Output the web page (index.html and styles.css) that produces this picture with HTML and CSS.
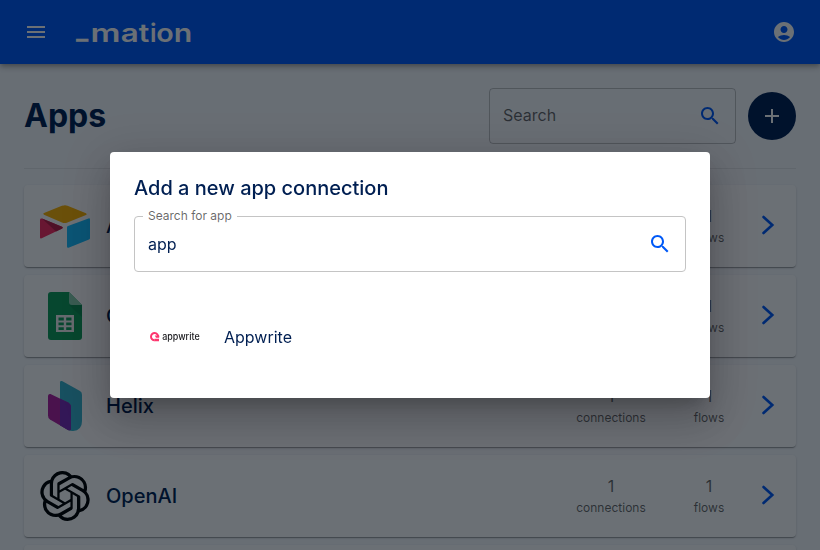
FILE: index.html
```html
<!DOCTYPE html>
<html lang="en">
<head>
<meta charset="UTF-8">
<meta name="viewport" content="width=device-width, initial-scale=1.0">
<title>Apps</title>
<link rel="stylesheet" href="styles.css">
</head>
<body>
<header class="appbar">
    <svg class="icon" viewBox="0 0 24 24"><path d="M3 18h18v-2H3v2zm0-5h18v-2H3v2zm0-7v2h18V6H3z"/></svg>
    <svg class="logo" width="120" height="34" viewBox="0 0 120 34">
        <text class="underscore" x="1.200" y="23.500">_</text>
        <text x="15.500" y="26.500" textLength="30" lengthAdjust="spacingAndGlyphs">m</text>
        <text x="45.800" y="26.500" textLength="18" lengthAdjust="spacingAndGlyphs">a</text>
        <text x="63.800" y="26.500" textLength="10.500" lengthAdjust="spacingAndGlyphs">t</text>
        <text x="75" y="26.500">i</text>
        <text x="81.300" y="26.500" textLength="17.500" lengthAdjust="spacingAndGlyphs">o</text>
        <text x="98.700" y="26.500" textLength="18.500" lengthAdjust="spacingAndGlyphs">n</text>
    </svg>
    <svg class="icon account" viewBox="0 0 24 24"><path d="M12 2C6.48 2 2 6.48 2 12s4.48 10 10 10 10-4.48 10-10S17.52 2 12 2zm0 4c1.93 0 3.5 1.57 3.5 3.5S13.93 13 12 13s-3.5-1.57-3.5-3.5S10.07 6 12 6zm0 14c-2.03 0-4.43-.82-6.14-2.88C7.55 15.8 9.68 15 12 15s4.45.8 6.14 2.12C16.43 19.18 14.03 20 12 20z"/></svg>
</header>

<main class="container">
    <div class="toolbar">
        <h1>Apps</h1>
        <div class="search">
            <span>Search</span>
            <svg class="icon" viewBox="0 0 24 24"><path d="M15.5 14h-.79l-.28-.27C15.41 12.59 16 11.11 16 9.5 16 5.91 13.09 3 9.5 3S3 5.91 3 9.5 5.91 16 9.5 16c1.61 0 3.09-.59 4.23-1.57l.27.28v.79l5 4.99L20.49 19l-4.99-5zm-6 0C7.01 14 5 11.99 5 9.5S7.01 5 9.5 5 14 7.01 14 9.5 11.99 14 9.5 14z"/></svg>
        </div>
        <button class="add-btn"><svg class="icon" viewBox="0 0 24 24"><path d="M19 13h-6v6h-2v-6H5v-2h6V5h2v6h6v2z"/></svg></button>
    </div>
    <hr>

    <div class="card">
        <svg class="app-icon" viewBox="0 0 50 50">
            <path fill="#fcb400" d="M22.500 4.500 4 12q-1.600.9 0 1.700L22 21.500q2.700 1 5.400 0L46 14q1.600-.8 0-1.700L27.500 4.700q-2.500-.9-5 0z"/>
            <path fill="#18bfff" d="M27 26.500v19q.1 1.600 1.500 1.200L49 38.500q1-.4 1-1.300V18.500q0-1.500-1.500-1.100L28 25q-1 .4-1 1.500z"/>
            <path fill="#f82b60" d="m22.200 27.500-20.500 9.800Q0 37.800 0 36.500V18.800Q.3 17 2 17.600l20 8.100q1.500.8.2 1.800z"/>
            <path fill="#ba1e45" d="m16 30.500-14-12.900 20 8.100q1.500.8.200 1.800z"/>
        </svg>
        <h2>Airtable</h2>
        <div class="count"><b>1</b><span>connections</span></div>
        <div class="count"><b>1</b><span>flows</span></div>
        <svg class="icon arrow" viewBox="0 0 24 24"><path d="m7.500 4 8.800 8-8.800 8"/></svg>
    </div>

    <div class="card">
        <svg class="app-icon" viewBox="0 0 50 50">
            <path fill="#0f9d58" d="M11 1h18l13 13v32q0 3-3 3H11q-3 0-3-3V4q0-3 3-3z"/>
            <path fill="#0b8049" d="m29 14 13 12V14z" opacity=".5"/>
            <path fill="#87ceac" d="M29 1v10q0 3 3 3h10z"/>
            <path fill="#f1f1f1" fill-rule="evenodd" d="M16 24h18v17H16zm2.500 2.500v3h5.300v-3zm7.700 0v3h5.300v-3zm-7.700 5v2.700h5.300v-2.700zm7.700 0v2.700h5.300v-2.700zm-7.700 4.700v2.800h5.300v-2.800zm7.700 0v2.800h5.300v-2.800z"/>
        </svg>
        <h2>Google Sheets</h2>
        <div class="count"><b>1</b><span>connections</span></div>
        <div class="count"><b>1</b><span>flows</span></div>
        <svg class="icon arrow" viewBox="0 0 24 24"><path d="m7.500 4 8.800 8-8.800 8"/></svg>
    </div>

    <div class="card">
        <svg class="app-icon" viewBox="0 0 50 50">
            <path fill="#38b4cc" d="M22 0 40 10q2 1.200 2 4v26q0 9.500-9 10-3 0-5-1l-8-5V1.500Q20.300-.6 22 0z"/>
            <path fill="#b0209f" d="m10.500 13 17.500 8.500q3 1.500 3 5V48q-.5 2-3 1L10 38.500q-2-1.200-2-4V14.500q.5-2 2.500-1.500z"/>
            <path fill="#7b2cb8" d="m20 17.700 8 3.800q3 1.500 3 5V48q-.5 2-3 1l-8-4.700z"/>
        </svg>
        <h2>Helix</h2>
        <div class="count"><b>1</b><span>connections</span></div>
        <div class="count"><b>1</b><span>flows</span></div>
        <svg class="icon arrow" viewBox="0 0 24 24"><path d="m7.500 4 8.800 8-8.800 8"/></svg>
    </div>

    <div class="card">
        <svg class="app-icon" viewBox="0 0 24 24"><path d="M22.2819 9.8211a5.9847 5.9847 0 0 0-.5157-4.9108 6.0462 6.0462 0 0 0-6.5098-2.9A6.0651 6.0651 0 0 0 4.9807 4.1818a5.9847 5.9847 0 0 0-3.9977 2.9 6.0462 6.0462 0 0 0 .7427 7.0966 5.98 5.98 0 0 0 .511 4.9107 6.051 6.051 0 0 0 6.5146 2.9001A5.9847 5.9847 0 0 0 13.2599 24a6.0557 6.0557 0 0 0 5.7718-4.2058 5.9894 5.9894 0 0 0 3.9977-2.9001 6.0557 6.0557 0 0 0-.7475-7.0729zm-9.022 12.6081a4.4755 4.4755 0 0 1-2.8764-1.0408l.1419-.0804 4.7783-2.7582a.7948.7948 0 0 0 .3927-.6813v-6.7369l2.02 1.1686a.071.071 0 0 1 .038.052v5.5826a4.504 4.504 0 0 1-4.4945 4.4944zm-9.6607-4.1254a4.4708 4.4708 0 0 1-.5346-3.0137l.142.0852 4.783 2.7582a.7712.7712 0 0 0 .7806 0l5.8428-3.3685v2.3324a.0804.0804 0 0 1-.0332.0615L9.74 19.9502a4.4992 4.4992 0 0 1-6.1408-1.6464zM2.3408 7.8956a4.485 4.485 0 0 1 2.3655-1.9728V11.6a.7664.7664 0 0 0 .3879.6765l5.8144 3.3543-2.0201 1.1685a.0757.0757 0 0 1-.071 0l-4.8303-2.7865A4.504 4.504 0 0 1 2.3408 7.872zm16.5963 3.8558L13.1038 8.364 15.1192 7.2a.0757.0757 0 0 1 .071 0l4.8303 2.7913a4.4944 4.4944 0 0 1-.6765 8.1042v-5.6772a.79.79 0 0 0-.407-.667zm2.0107-3.0231l-.142-.0852-4.7735-2.7818a.7759.7759 0 0 0-.7854 0L9.409 9.2297V6.8974a.0662.0662 0 0 1 .0284-.0615l4.8303-2.7866a4.4992 4.4992 0 0 1 6.6802 4.66zM8.3065 12.863l-2.02-1.1638a.0804.0804 0 0 1-.038-.0567V6.0742a4.4992 4.4992 0 0 1 7.3757-3.4537l-.142.0805L8.704 5.459a.7948.7948 0 0 0-.3927.6813zm1.0976-2.3654l2.602-1.4998 2.6069 1.4998v2.9994l-2.5974 1.4997-2.6067-1.4997Z"/></svg>
        <h2>OpenAI</h2>
        <div class="count"><b>1</b><span>connections</span></div>
        <div class="count"><b>1</b><span>flows</span></div>
        <svg class="icon arrow" viewBox="0 0 24 24"><path d="m7.500 4 8.800 8-8.800 8"/></svg>
    </div>

    <div class="card"></div>
</main>

<div class="backdrop">
    <div class="dialog">
        <h3>Add a new app connection</h3>
        <div class="field">
            <label for="app-search">Search for app</label>
            <input type="text" id="app-search" value="app">
            <svg class="icon" viewBox="0 0 24 24"><path d="M15.5 14h-.79l-.28-.27C15.41 12.59 16 11.11 16 9.5 16 5.91 13.09 3 9.5 3S3 5.91 3 9.5 5.91 16 9.5 16c1.61 0 3.09-.59 4.23-1.57l.27.28v.79l5 4.99L20.49 19l-4.99-5zm-6 0C7.01 14 5 11.99 5 9.5S7.01 5 9.5 5 14 7.01 14 9.5 11.99 14 9.5 14z"/></svg>
        </div>
        <div class="result">
            <svg class="appwrite" viewBox="0 0 50 50">
                <path fill="none" stroke="#fd366e" stroke-width="2" d="M8.200 25A3.600 3.600 0 1 0 4.700 28.300"/>
                <path fill="#fd366e" d="M4.500 26.800H9v2.500H4.500zM4.800 23.500h4.400v2.200H6z"/>
                <text x="12.200" y="27.800" textLength="37.500" lengthAdjust="spacingAndGlyphs">appwrite</text>
            </svg>
            <span>Appwrite</span>
        </div>
    </div>
</div>
</body>
</html>
```
FILE: styles.css
```css
* {
    box-sizing: border-box;
}

body {
    margin: 0;
    height: 550px;
    overflow: hidden;
    font-family: Inter, sans-serif;
    font-size: 16px;
    color: #001f52;
    background: #f8fafd;
}

h1, h2, h3 {
    margin: 0;
}

.icon {
    width: 24px;
    height: 24px;
    flex: none;
    fill: currentColor;
}

.appbar {
    position: relative;
    display: flex;
    align-items: center;
    height: 64px;
    padding: 0 24px;
    color: white;
    background: #0059f7;
    box-shadow: 0 2px 4px -1px rgba(0, 0, 0, 0.2), 0 4px 5px rgba(0, 0, 0, 0.14), 0 1px 10px rgba(0, 0, 0, 0.12);
}

.logo {
    margin-left: 27px;
    fill: white;
    font-size: 25px;
    font-weight: 600;
}

.underscore {
    stroke: white;
    stroke-width: 0.6;
}

.account {
    margin-left: auto;
}

.container {
    height: 486px;
    padding: 24px 24px 0;
    overflow: hidden;
}

.toolbar {
    display: flex;
    align-items: center;
    gap: 12px;
}

h1 {
    flex: 1;
    padding-bottom: 1px;
    font-size: 32px;
    font-weight: 700;
}

.search {
    display: flex;
    align-items: center;
    justify-content: space-between;
    width: 247px;
    height: 56px;
    padding: 0 13px;
    border: 1px solid rgba(0, 0, 0, 0.23);
    border-radius: 4px;
    color: rgba(0, 0, 0, 0.6);
}

.search span {
    padding-bottom: 2px;
}

.search .icon, .field .icon {
    color: #0059f7;
}

.add-btn {
    display: flex;
    align-items: center;
    justify-content: center;
    width: 48px;
    height: 48px;
    padding: 0;
    border: none;
    border-radius: 50%;
    color: white;
    background: #001f52;
}

hr {
    margin: 24px 0 16px;
    border: none;
    border-top: 1px solid rgba(0, 0, 0, 0.08);
}

.card {
    display: flex;
    align-items: center;
    height: 82px;
    margin-bottom: 8px;
    padding: 0 16px;
    border-radius: 4px;
    background: white;
    box-shadow: 0 2px 1px -1px rgba(0, 0, 0, 0.2), 0 1px 1px rgba(0, 0, 0, 0.14), 0 1px 3px rgba(0, 0, 0, 0.12);
}

.app-icon {
    width: 50px;
    height: 50px;
    margin-right: 16px;
}

h2 {
    flex: 1;
    font-size: 20px;
    font-weight: 500;
}

.count {
    display: flex;
    flex-direction: column;
    align-items: center;
    width: 98px;
    color: rgba(0, 0, 0, 0.6);
}

.count b {
    font-weight: 400;
    line-height: 24px;
}

.count span {
    font-size: 12px;
    line-height: 20px;
}

.arrow {
    margin: 0 0 2px -2px;
    fill: none;
    stroke: #0059f7;
    stroke-width: 2.6;
    stroke-linecap: round;
}

.backdrop {
    position: fixed;
    inset: 0;
    display: flex;
    align-items: center;
    justify-content: center;
    background: rgba(0, 9, 18, 0.58);
}

.dialog {
    width: 600px;
    height: 246px;
    padding: 20px 24px;
    border-radius: 4px;
    background: white;
    box-shadow: 0 11px 15px -7px rgba(0, 0, 0, 0.2), 0 24px 38px 3px rgba(0, 0, 0, 0.14), 0 9px 46px 8px rgba(0, 0, 0, 0.12);
}

h3 {
    font-size: 20px;
    font-weight: 500;
    line-height: 32px;
}

.field {
    position: relative;
    display: flex;
    align-items: center;
    height: 56px;
    margin-top: 12px;
    padding: 0 13px;
    border: 1px solid #c4c4c4;
    border-radius: 4px;
}

/* label sits on the border line */
.field label {
    position: absolute;
    top: -9px;
    left: 8px;
    padding: 0 5px;
    font-size: 12px;
    line-height: 16px;
    color: rgba(0, 0, 0, 0.6);
    background: white;
}

.field input {
    flex: 1;
    padding: 0;
    border: none;
    outline: none;
    font: inherit;
    color: inherit;
}

.result {
    display: flex;
    align-items: center;
    gap: 24px;
    height: 66px;
    margin-top: 32px;
    padding: 0 16px;
}

.appwrite {
    width: 50px;
    height: 50px;
    overflow: visible;
    font-size: 9.5px;
    font-weight: 500;
    fill: #19191d;
}
```
